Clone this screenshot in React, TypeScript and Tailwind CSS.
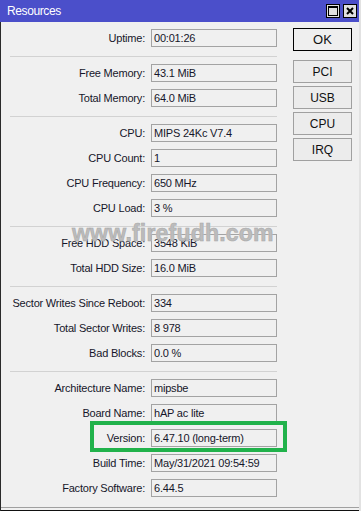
import React from 'react';

type Row = [string, string];

const groups: Row[][] = [
  [['Uptime', '00:01:26']],
  [
    ['Free Memory', '43.1 MiB'],
    ['Total Memory', '64.0 MiB'],
  ],
  [
    ['CPU', 'MIPS 24Kc V7.4'],
    ['CPU Count', '1'],
    ['CPU Frequency', '650 MHz'],
    ['CPU Load', '3 %'],
  ],
  [
    ['Free HDD Space', '3548 KiB'],
    ['Total HDD Size', '16.0 MiB'],
  ],
  [
    ['Sector Writes Since Reboot', '334'],
    ['Total Sector Writes', '8 978'],
    ['Bad Blocks', '0.0 %'],
  ],
  [
    ['Architecture Name', 'mipsbe'],
    ['Board Name', 'hAP ac lite'],
    ['Version', '6.47.10 (long-term)'],
    ['Build Time', 'May/31/2021 09:54:59'],
    ['Factory Software', '6.44.5'],
  ],
];

function Field({ label, value }: { label: string; value: string }) {
  return (
    <div className="flex items-center gap-[6px] h-[18px]">
      <div className="w-[135px] text-right whitespace-nowrap">{label}:</div>
      <div className="w-[126px] h-[18px] border border-[#a3a3a3] pl-[2px] flex items-center whitespace-nowrap overflow-hidden">
        {value}
      </div>
    </div>
  );
}

function SideButton({ children, main }: { children: React.ReactNode; main?: boolean }) {
  return (
    <button
      className={
        main
          ? 'w-[59px] h-[23px] border border-black bg-[#efefef] text-[13px] text-[#111]'
          : 'w-[59px] h-[23px] border border-[#a0a0a0] bg-[#ececec] text-[12px] text-[#111]'
      }
    >
      {children}
    </button>
  );
}

export default function App() {
  return (
    <div className="relative w-[361px] h-[511px] flex flex-col bg-[#f0f0f0] border-r-2 border-[#e2e2e2] font-['Liberation_Sans',Arial,sans-serif] overflow-hidden">
      {/* title bar */}
      <div className="h-[22px] bg-[#4b4fca] flex items-center pl-[7px] pr-[2px]">
        <span className="text-white text-[12px] tracking-[-0.4px] flex-1">Resources</span>
        <div className="flex gap-[3px]">
          <div className="w-[14px] h-[14px] border border-black bg-[#e0e0e0] flex items-center justify-center">
            <svg width="10" height="10" viewBox="0 0 10 10">
              <rect x="0.5" y="0.5" width="9" height="9" fill="none" stroke="#000" />
              <line x1="0" y1="1.5" x2="10" y2="1.5" stroke="#000" />
            </svg>
          </div>
          <div className="w-[14px] h-[14px] border border-black bg-[#e0e0e0] flex items-center justify-center">
            <svg width="8" height="8" viewBox="0 0 8 8">
              <path d="M1 1L7 7M7 1L1 7" stroke="#000" strokeWidth="2" />
            </svg>
          </div>
        </div>
      </div>

      {/* body */}
      <div className="flex-1 flex flex-col border-l border-[#2a2a2a]">
        <div className="flex-1 flex pl-[9px] pt-[6px] gap-[16px] text-[11px] tracking-[-0.2px] text-[#16162a]">
          <div className="w-[267px] pt-px flex flex-col">
            {groups.map((g, i) => (
              <React.Fragment key={i}>
                {i > 0 && <div className="h-px bg-[#d2d2d2] mt-[9px] mb-[7px]" />}
                <div className="flex flex-col gap-[7px]">
                  {g.map(([l, v]) => (
                    <Field key={l} label={l} value={v} />
                  ))}
                </div>
              </React.Fragment>
            ))}
          </div>
          <div className="flex flex-col tracking-normal">
            <SideButton main>OK</SideButton>
            <div className="mt-[9px] flex flex-col gap-[3px]">
              <SideButton>PCI</SideButton>
              <SideButton>USB</SideButton>
              <SideButton>CPU</SideButton>
              <SideButton>IRQ</SideButton>
            </div>
          </div>
        </div>
        <div className="h-[10px]" />
        <div className="h-px bg-[#a0a0a0]" />
        <div className="h-[2px] bg-[#f0f0f0]" />
        <div className="h-px bg-[#111]" />
      </div>

      {/* watermark */}
      <div className="absolute left-[72px] top-[222px] text-[23px] leading-none font-bold tracking-[0.2px] text-[#b0b0b0]/85 [-webkit-text-stroke:0.6px_#a8a8a8] [text-shadow:0_0_1px_#fff] whitespace-nowrap pointer-events-none">
        www.firefudh.com
      </div>

      {/* highlight */}
      <div className="absolute left-[90px] top-[421px] w-[197px] h-[31px] border-4 border-[#21b24b] pointer-events-none" />
    </div>
  );
}
